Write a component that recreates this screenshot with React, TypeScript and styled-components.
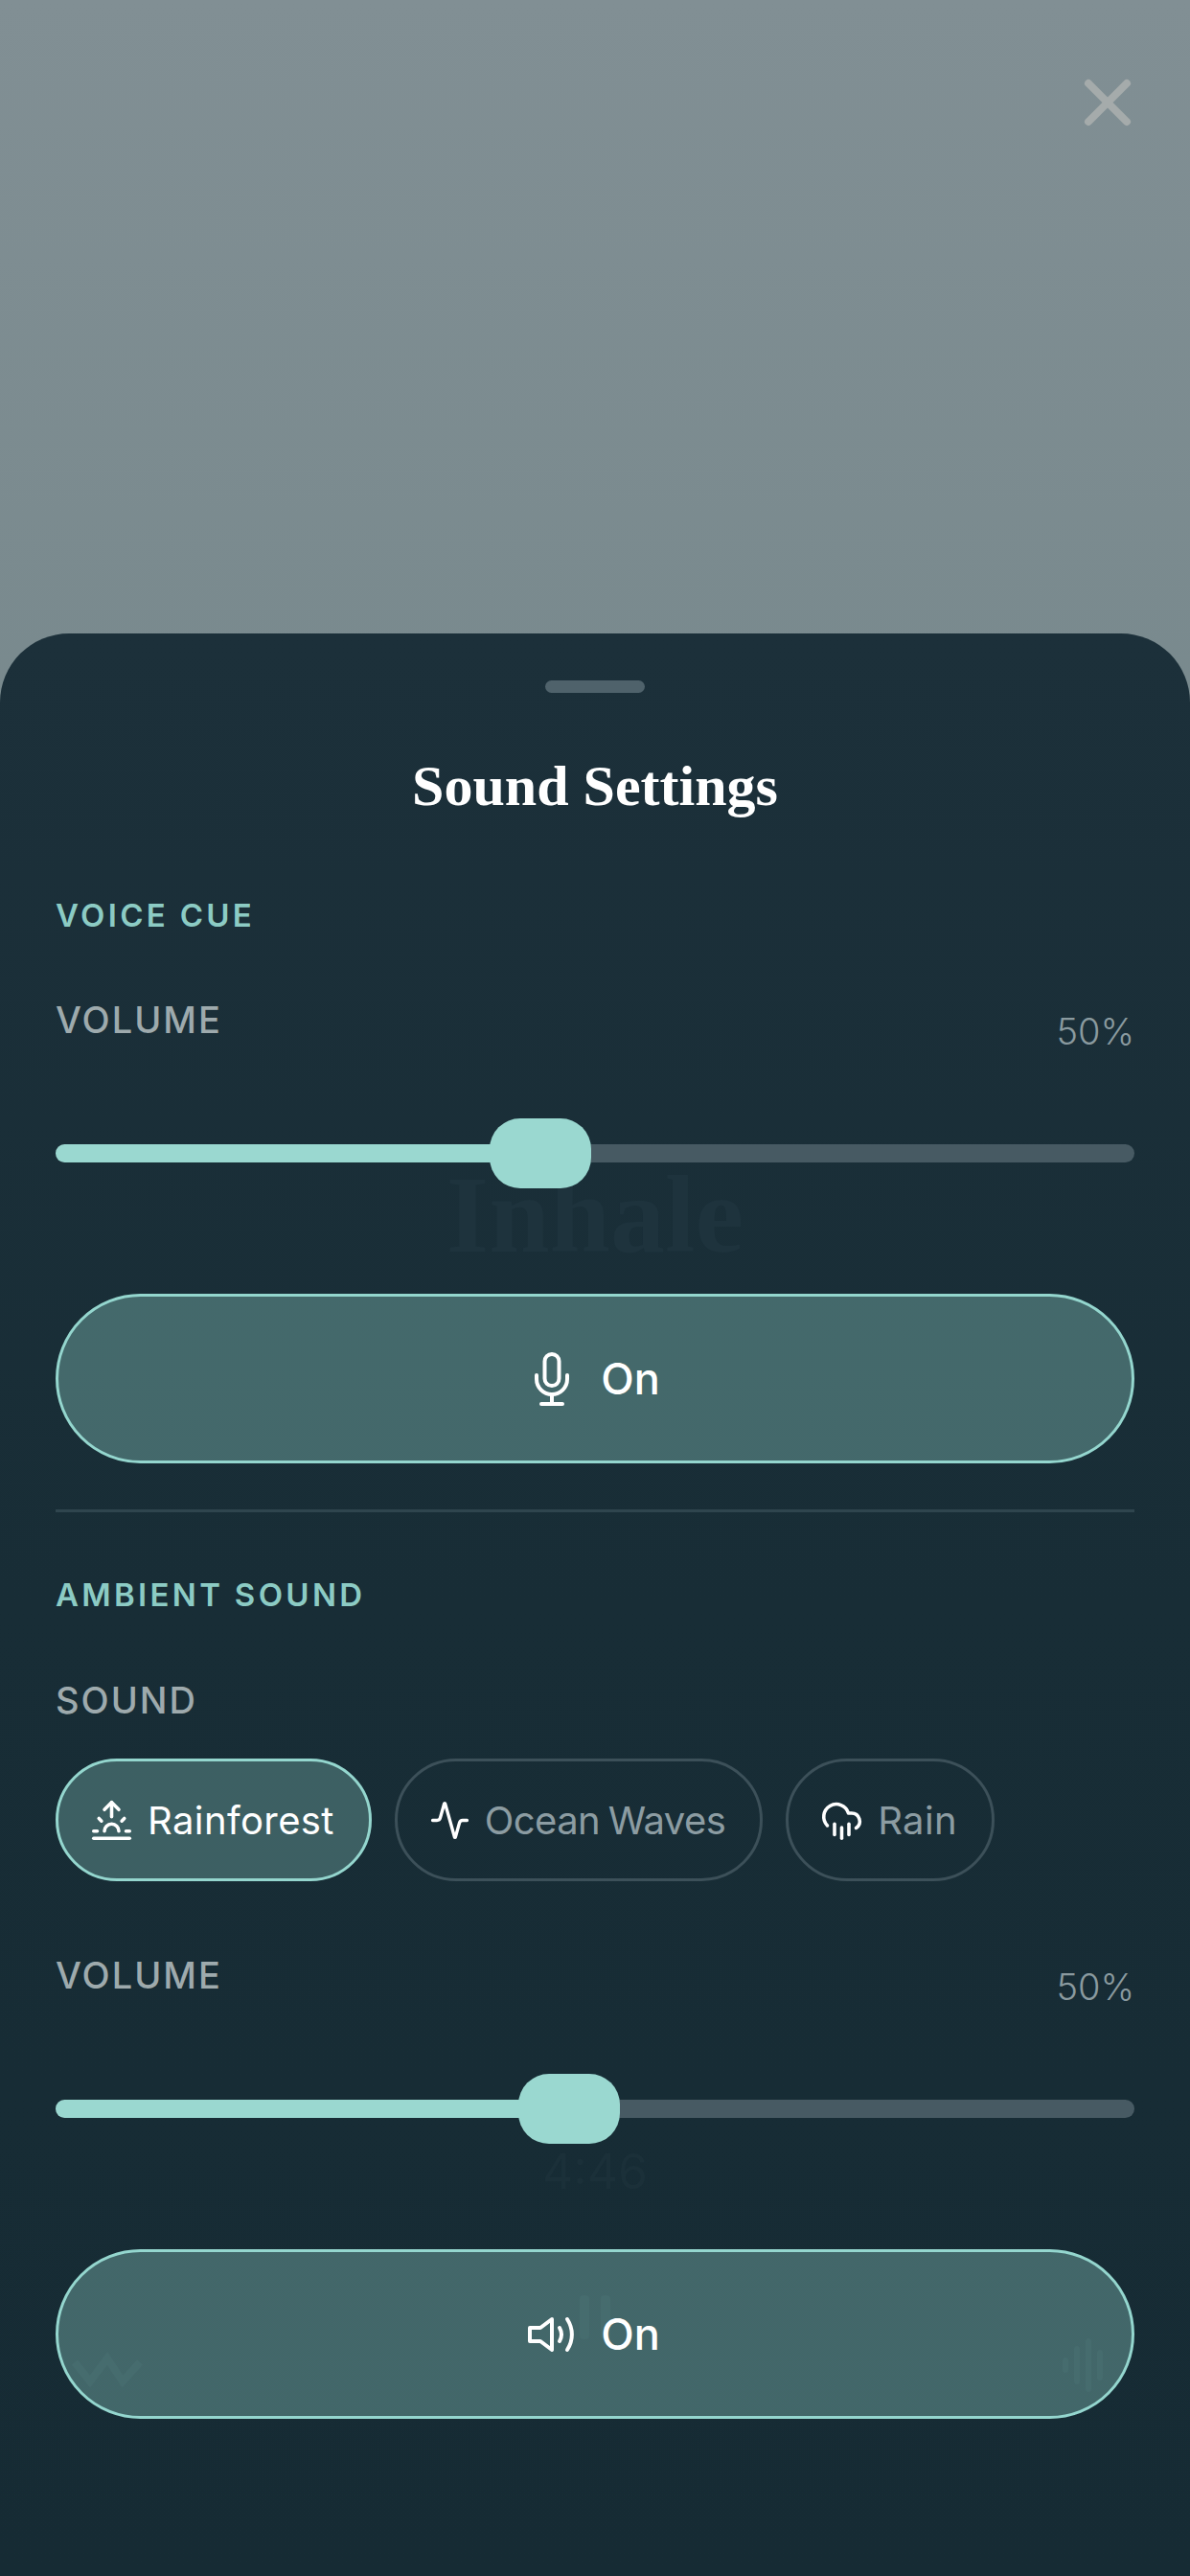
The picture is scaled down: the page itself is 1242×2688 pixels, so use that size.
import { Activity, CloudRain, Sunrise, X } from 'lucide-react'
import type { ReactNode } from 'react'
import styled, { createGlobalStyle } from 'styled-components'

const GlobalStyle = createGlobalStyle`
  html, body {
    margin: 0;
    padding: 0;
    background: #7c8c90;
  }
  * {
    box-sizing: border-box;
  }
`

const Screen = styled.div`
  width: 1242px;
  height: 2688px;
  display: flex;
  flex-direction: column;
  overflow: hidden;
  font-family: Inter, 'Liberation Sans', sans-serif;
  background: linear-gradient(180deg, #818f94 0%, #78898d 30%);
`

const Backdrop = styled.div`
  height: 661px;
  flex: none;
  display: flex;
  justify-content: flex-end;
  align-items: flex-start;
  padding: 67px 46px 0 0;
`

const CloseButton = styled.button`
  border: 0;
  padding: 0;
  background: none;
  display: flex;
  color: #a5abab;
`

const Sheet = styled.div`
  position: relative;
  flex: 1;
  display: flex;
  flex-direction: column;
  padding: 49px 58px 0;
  border-radius: 72px 72px 0 0;
  background: linear-gradient(180deg, #1c303a 0%, #182d36 50%, #162b34 100%);
`

const Handle = styled.div`
  width: 104px;
  height: 13px;
  flex: none;
  align-self: center;
  border-radius: 7px;
  background: #4f626b;
`

const Title = styled.h2`
  margin: 64px 0 0;
  font-family: 'Liberation Serif', serif;
  font-size: 60px;
  line-height: 66px;
  font-weight: 700;
  text-align: center;
  color: #fff;
`

const SectionLabel = styled.div<{ $gap: number }>`
  position: relative;
  margin-top: ${({ $gap }) => $gap}px;
  font-size: 33px;
  line-height: 40px;
  font-weight: 600;
  letter-spacing: 3.3px;
  color: #8ccbc4;
`

const FieldRow = styled.div<{ $gap: number }>`
  position: relative;
  margin-top: ${({ $gap }) => $gap}px;
  display: flex;
  justify-content: space-between;
  align-items: center;
`

const FieldLabel = styled.div<{ $gap?: number }>`
  position: relative;
  margin-top: ${({ $gap }) => $gap ?? 0}px;
  margin-bottom: ${({ $gap }) => ($gap ? 0 : 24)}px;
  font-size: 38px;
  line-height: 50px;
  font-weight: 500;
  letter-spacing: 2px;
  color: #9eaaad;
`

const FieldValue = styled.div`
  font-size: 38px;
  line-height: 50px;
  font-weight: 300;
  color: #8a9a9f;
`

const Slider = styled.div`
  position: relative;
  flex: none;
  height: 73px;
  margin-top: 54px;
  display: flex;
  align-items: center;
`

const Track = styled.div`
  width: 100%;
  height: 19px;
  border-radius: 10px;
  overflow: hidden;
  background: #475a63;
`

const TrackFill = styled.div`
  height: 100%;
  background: #9ad8d0;
`

const Thumb = styled.div`
  position: absolute;
  top: 0;
  width: 106px;
  height: 73px;
  margin-left: -53px;
  border-radius: 32px;
  background: #9ad8d0;
`

const ToggleButton = styled.button`
  position: relative;
  flex: none;
  height: 177px;
  margin-top: 110px;
  display: flex;
  align-items: center;
  justify-content: center;
  gap: 29px;
  border: 3px solid #94d6ce;
  border-radius: 89px;
  background: rgba(148, 214, 206, 0.35);
  color: #fff;
  font-family: inherit;
  font-size: 45px;
  font-weight: 500;
`

const ToggleIcon = styled.span`
  width: 45px;
  flex: none;
  display: flex;
  justify-content: center;

  svg {
    flex: none;
  }
`

const Divider = styled.div`
  flex: none;
  height: 3px;
  margin-top: 48px;
  background: #2f454e;
`

const Chips = styled.div`
  position: relative;
  margin-top: 36px;
  display: flex;
  gap: 24px;
`

const Chip = styled.button<{ $active?: boolean; $tight?: boolean }>`
  height: 128px;
  padding: 0 36px 0 33px;
  display: flex;
  align-items: center;
  gap: 15px;
  border: 3px solid ${({ $active }) => ($active ? '#94d6ce' : '#3c5059')};
  border-radius: 64px;
  background: ${({ $active }) => ($active ? 'rgba(148, 214, 206, 0.3)' : 'transparent')};
  color: ${({ $active }) => ($active ? '#fff' : '#8c9ca2')};
  font-family: inherit;
  font-size: 40px;
  font-weight: 400;
  letter-spacing: ${({ $tight }) => ($tight ? '-0.6px' : '0.4px')};
  word-spacing: ${({ $tight }) => ($tight ? '-2px' : '0')};

  svg {
    color: #fff;
    flex: none;
  }
`

const GhostWord = styled.div<{ $top: number; $size: number; $color: string; $serif?: boolean }>`
  position: absolute;
  left: 0;
  right: 0;
  top: ${({ $top }) => $top}px;
  text-align: center;
  font-family: ${({ $serif }) => ($serif ? "'Liberation Serif', serif" : 'inherit')};
  font-weight: ${({ $serif }) => ($serif ? 700 : 400)};
  font-size: ${({ $size }) => $size}px;
  line-height: 1;
  color: ${({ $color }) => $color};
`

const GhostIcon = styled.svg<{ $left: number; $top: number }>`
  position: absolute;
  left: ${({ $left }) => $left}px;
  top: ${({ $top }) => $top}px;
  color: #1d333b;
`

const sliderPercent = (px: number) => `${(px / 1126) * 100}%`

function VolumeSlider({ at }: { at: number }) {
  return (
    <Slider>
      <Track>
        <TrackFill style={{ width: sliderPercent(at) }} />
      </Track>
      <Thumb style={{ left: sliderPercent(at) }} />
    </Slider>
  )
}

function Toggle({ icon }: { icon: ReactNode }) {
  return (
    <ToggleButton>
      <ToggleIcon>{icon}</ToggleIcon>
      On
    </ToggleButton>
  )
}

function MicIcon() {
  return (
    <svg width="36" height="56" viewBox="0 0 36 56" fill="none" stroke="currentColor" strokeWidth="4" strokeLinecap="round">
      <rect x="10.5" y="2" width="15" height="33" rx="7.5" />
      <path d="M2 24v4a16 16 0 0 0 32 0v-4" />
      <path d="M18 44v10M7 54h22" />
    </svg>
  )
}

function SpeakerIcon() {
  return (
    <svg width="50" height="38" viewBox="0 0 50 38" fill="none" stroke="currentColor" strokeWidth="4" strokeLinecap="round" strokeLinejoin="round">
      <path d="M25 3 13 12H2v14h11l12 9z" />
      <path d="M33 12c2.600 4.500 2.600 9.500 0 14" />
      <path d="M41 3c6.500 10 6.500 22 0 32" />
    </svg>
  )
}

export default function App() {
  return (
    <Screen>
      <GlobalStyle />
      <Backdrop>
        <CloseButton aria-label="Close">
          <X size={80} strokeWidth={2.4} />
        </CloseButton>
      </Backdrop>
      <Sheet>
        <GhostWord $serif $top={550} $size={114} $color="#1e333d">
          Inhale
        </GhostWord>
        <GhostWord $top={1580} $size={50} $color="#1b3039">
          4:46
        </GhostWord>
        {/* faint player controls showing through the sheet */}
        <GhostIcon $left={604} $top={1734} width="34" height="46" viewBox="0 0 34 46" fill="currentColor" aria-hidden>
          <rect x="1" y="0" width="10" height="46" rx="4" />
          <rect x="23" y="0" width="10" height="46" rx="4" />
        </GhostIcon>
        <GhostIcon $left={74} $top={1790} width="76" height="44" viewBox="0 0 76 44" fill="none" stroke="currentColor" strokeWidth="8" aria-hidden>
          <path d="M4 14 20 34 38 10 54 34 72 14" />
        </GhostIcon>
        <GhostIcon $left={1106} $top={1776} width="56" height="62" viewBox="0 0 56 62" fill="none" stroke="currentColor" strokeWidth="6" strokeLinecap="round" aria-hidden>
          <path d="M6 26v10M18 14v34M30 6v50M42 18v26" />
        </GhostIcon>

        <Handle />
        <Title>Sound Settings</Title>

        <SectionLabel $gap={82}>VOICE CUE</SectionLabel>
        <FieldRow $gap={64}>
          <FieldLabel>VOLUME</FieldLabel>
          <FieldValue>50%</FieldValue>
        </FieldRow>
        <VolumeSlider at={506} />
        <Toggle icon={<MicIcon />} />
        <Divider />

        <SectionLabel $gap={66}>AMBIENT SOUND</SectionLabel>
        <FieldLabel $gap={65}>SOUND</FieldLabel>
        <Chips>
          <Chip $active>
            <Sunrise size={45} strokeWidth={1.9} />
            Rainforest
          </Chip>
          <Chip $tight>
            <Activity size={43} strokeWidth={1.9} />
            Ocean Waves
          </Chip>
          <Chip>
            <CloudRain size={45} strokeWidth={1.9} />
            Rain
          </Chip>
        </Chips>
        <FieldRow $gap={73}>
          <FieldLabel>VOLUME</FieldLabel>
          <FieldValue>50%</FieldValue>
        </FieldRow>
        <VolumeSlider at={536} />
        <Toggle icon={<SpeakerIcon />} />
      </Sheet>
    </Screen>
  )
}
